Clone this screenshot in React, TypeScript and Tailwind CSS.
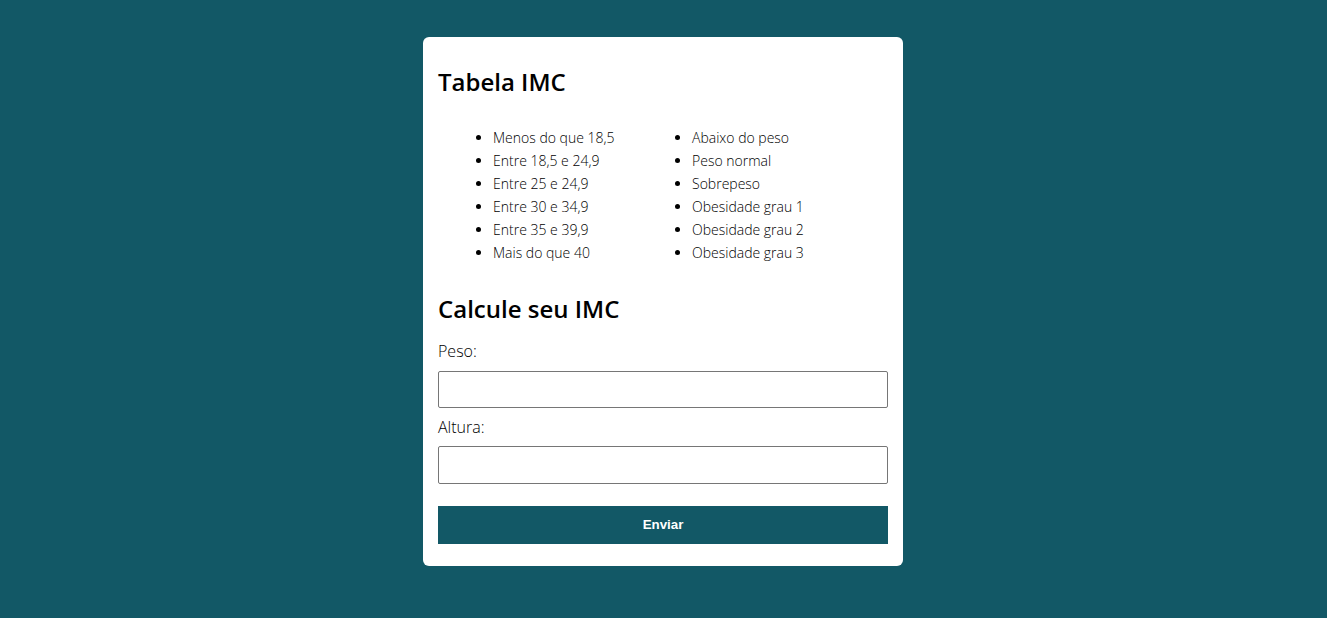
export default function App() {
  const faixas = [
    "Menos do que 18,5",
    "Entre 18,5 e 24,9",
    "Entre 25 e 24,9",
    "Entre 30 e 34,9",
    "Entre 35 e 39,9",
    "Mais do que 40",
  ];
  const classes = [
    "Abaixo do peso",
    "Peso normal",
    "Sobrepeso",
    "Obesidade grau 1",
    "Obesidade grau 2",
    "Obesidade grau 3",
  ];

  return (
    <div className="min-h-screen w-full bg-[#125866] pt-[37px] font-['Open_Sans',sans-serif] text-black">
      <div className="ml-[calc(50%-240.5px)] w-[480px] rounded-md bg-white px-[15px] pt-[28px] pb-[22px]">
        <h2 className="text-[24px] font-semibold leading-[33px]">Tabela IMC</h2>

        <div className="mt-[28px] flex pl-[55px]">
          <ul className="w-[199px] list-disc text-[14px] font-light leading-[23px]">
            {faixas.map((f) => (
              <li key={f}>{f}</li>
            ))}
          </ul>
          <ul className="list-disc text-[14px] font-light leading-[23px]">
            {classes.map((c) => (
              <li key={c}>{c}</li>
            ))}
          </ul>
        </div>

        <h2 className="mt-[28px] text-[24px] font-semibold leading-[33px]">Calcule seu IMC</h2>

        <form className="mt-[15px] flex flex-col" onSubmit={(e) => e.preventDefault()}>
          <label className="text-[16px] font-light leading-[22px]">Peso:</label>
          <input
            type="text"
            className="mt-[9px] h-[37px] w-full rounded-[2px] border border-[#767676] px-2"
          />
          <label className="mt-[8px] text-[16px] font-light leading-[22px]">Altura:</label>
          <input
            type="text"
            className="mt-[8px] h-[38px] w-full rounded-[2px] border border-[#767676] px-2"
          />
          <button
            type="submit"
            className="mt-[22px] h-[38px] w-full bg-[#125866] font-['Liberation_Sans',Arial,sans-serif] text-[13.33px] font-bold text-white"
          >
            Enviar
          </button>
        </form>
      </div>
    </div>
  );
}
